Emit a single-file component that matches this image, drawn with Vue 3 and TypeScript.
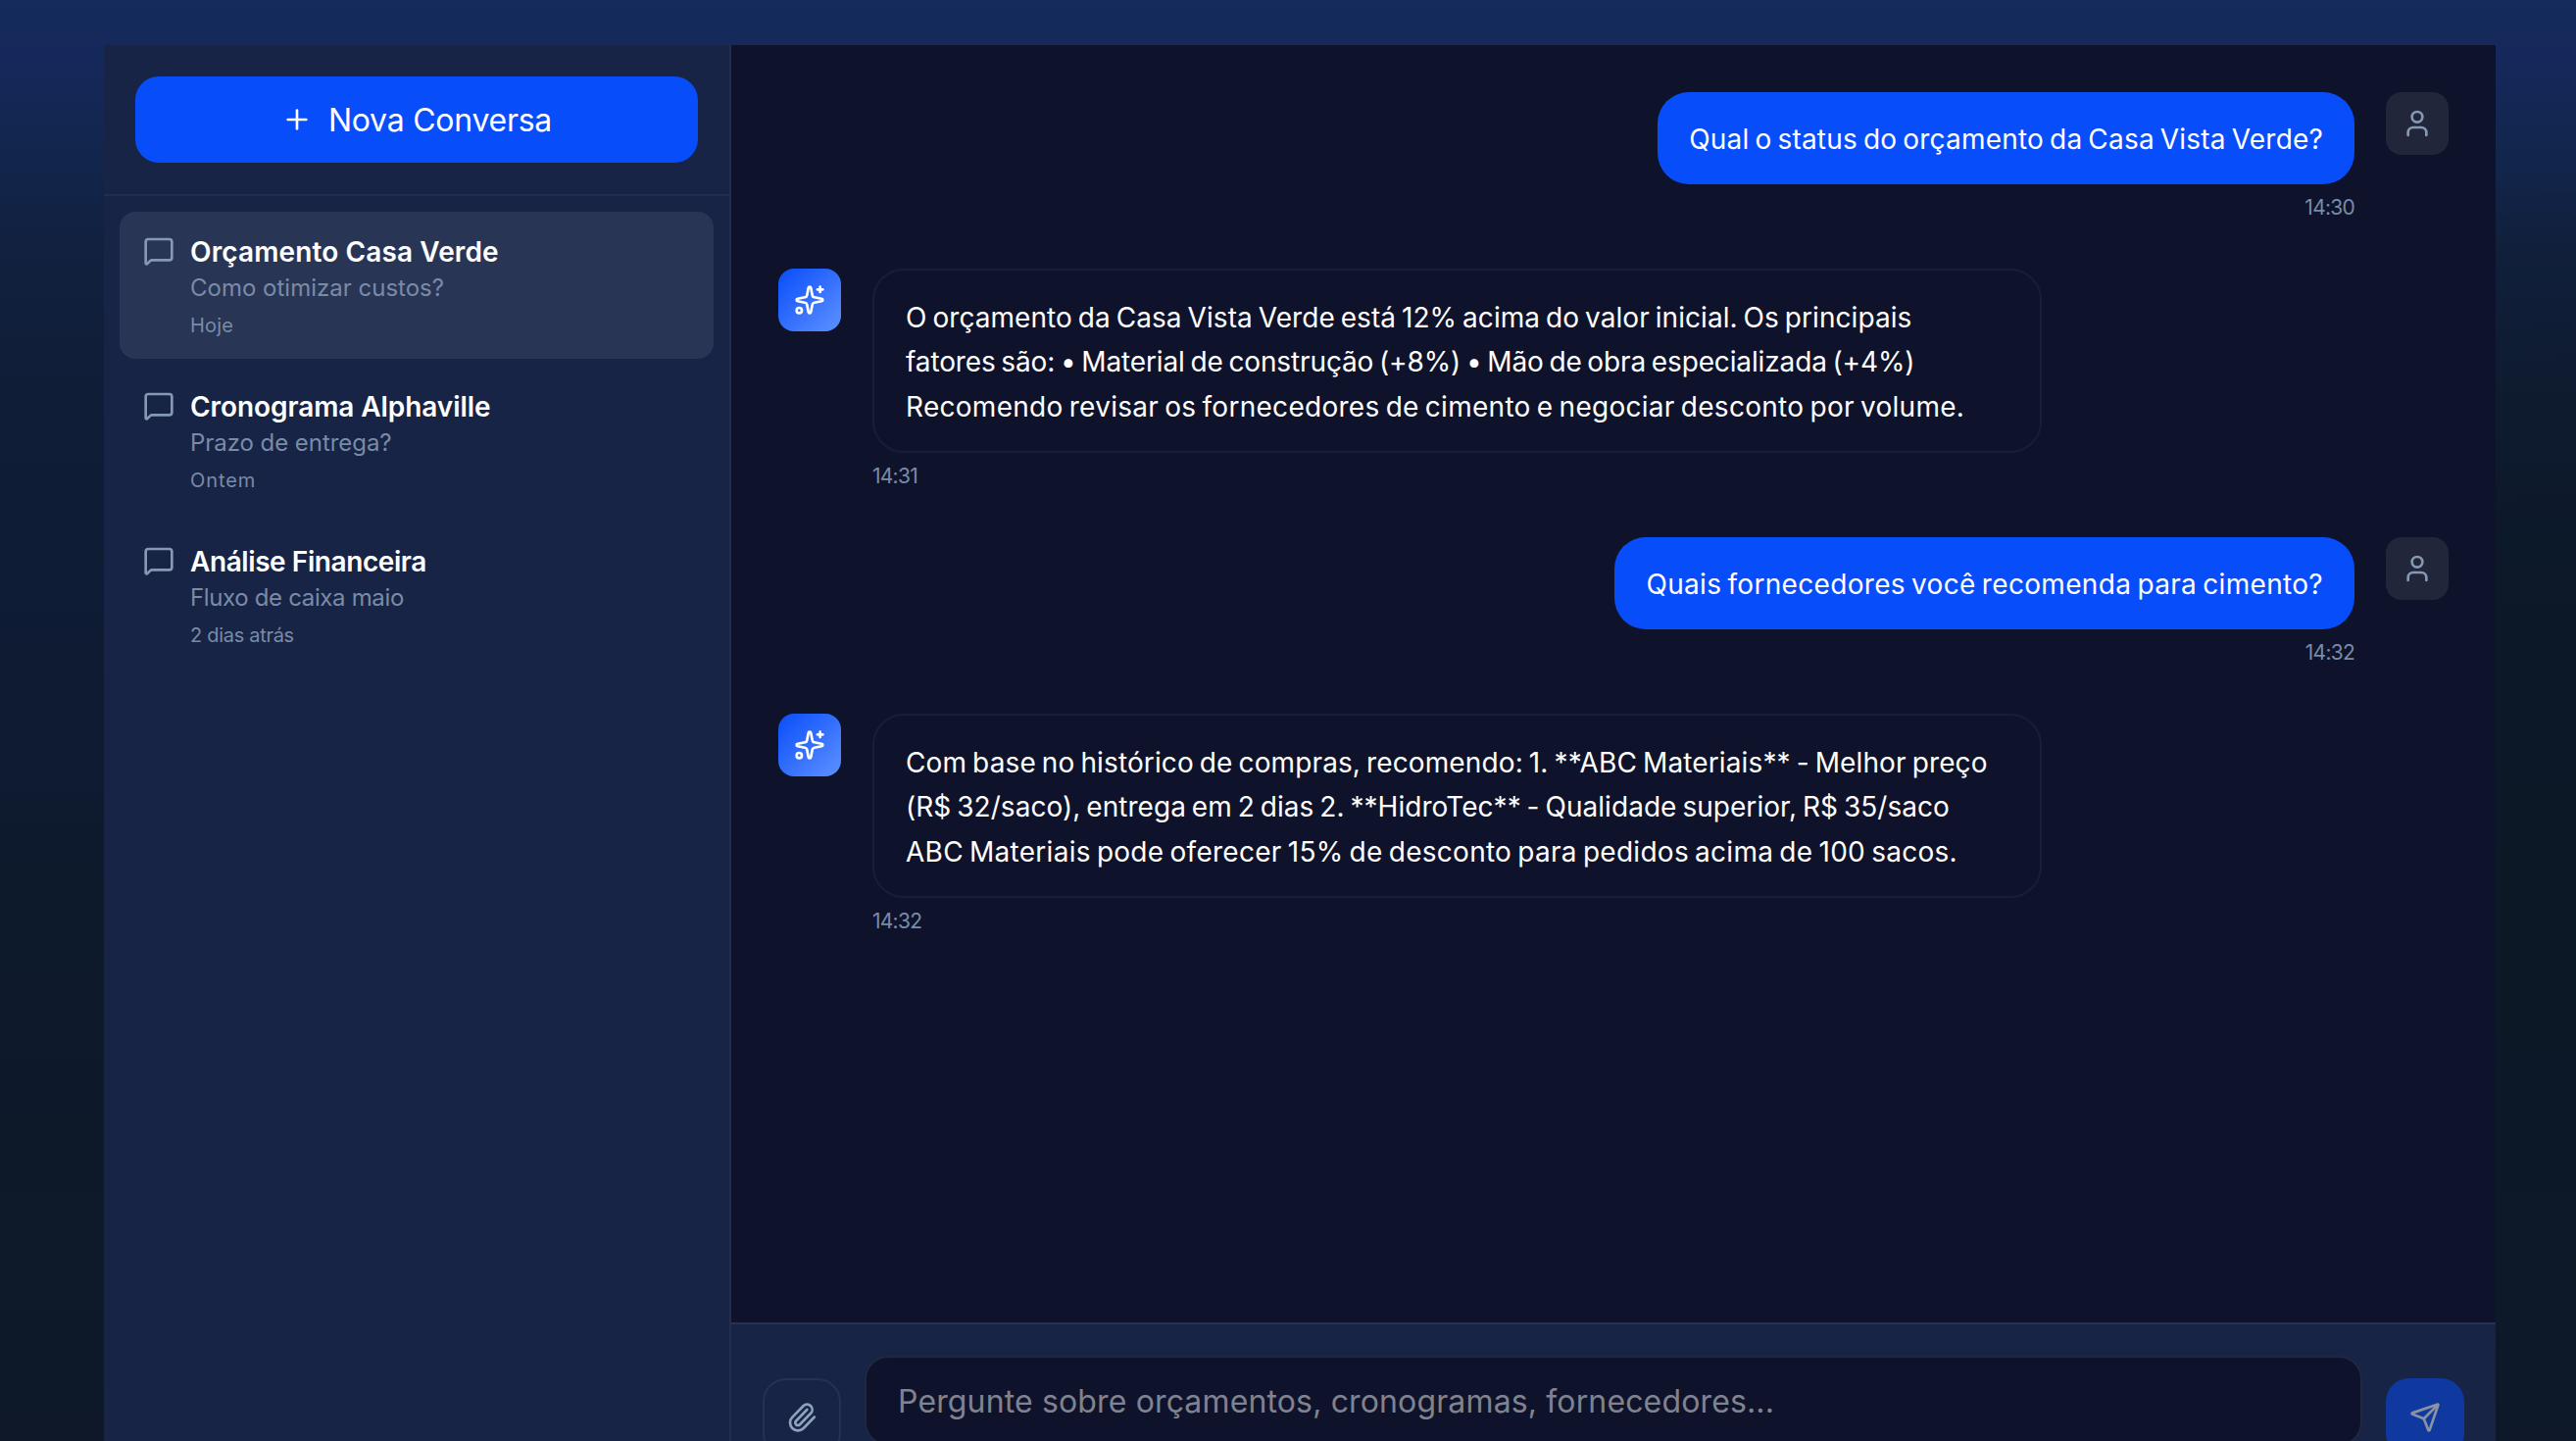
<script setup lang="ts">
interface Label {
  text: string
  spacing: number
}

interface Conversation {
  title: Label
  preview: Label
  when: Label
  active: boolean
}

interface Message {
  id: number
  role: 'user' | 'assistant'
  lines: Label[]
  time: string
}

const conversations: Conversation[] = [
  {
    title: { text: 'Orçamento Casa Verde', spacing: 0.12 },
    preview: { text: 'Como otimizar custos?', spacing: 0 },
    when: { text: 'Hoje', spacing: 0.2 },
    active: true,
  },
  {
    title: { text: 'Cronograma Alphaville', spacing: -0.08 },
    preview: { text: 'Prazo de entrega?', spacing: -0.05 },
    when: { text: 'Ontem', spacing: 0.9 },
    active: false,
  },
  {
    title: { text: 'Análise Financeira', spacing: -0.42 },
    preview: { text: 'Fluxo de caixa maio', spacing: -0.35 },
    when: { text: '2 dias atrás', spacing: -0.3 },
    active: false,
  },
]

const messages: Message[] = [
  {
    id: 1,
    role: 'user',
    lines: [{ text: 'Qual o status do orçamento da Casa Vista Verde?', spacing: 0.19 }],
    time: '14:30',
  },
  {
    id: 2,
    role: 'assistant',
    lines: [
      { text: 'O orçamento da Casa Vista Verde está 12% acima do valor inicial. Os principais', spacing: 0.06 },
      { text: 'fatores são: • Material de construção (+8%) • Mão de obra especializada (+4%)', spacing: -0.13 },
      { text: 'Recomendo revisar os fornecedores de cimento e negociar desconto por volume.', spacing: 0.28 },
    ],
    time: '14:31',
  },
  {
    id: 3,
    role: 'user',
    lines: [{ text: 'Quais fornecedores você recomenda para cimento?', spacing: 0.32 }],
    time: '14:32',
  },
  {
    id: 4,
    role: 'assistant',
    lines: [
      { text: 'Com base no histórico de compras, recomendo: 1. **ABC Materiais** - Melhor preço', spacing: 0.12 },
      { text: '(R$ 32/saco), entrega em 2 dias 2. **HidroTec** - Qualidade superior, R$ 35/saco', spacing: 0.045 },
      { text: 'ABC Materiais pode oferecer 15% de desconto para pedidos acima de 100 sacos.', spacing: 0.27 },
    ],
    time: '14:32',
  },
]

const track = (label: Label) => ({ letterSpacing: `${label.spacing}px` })
</script>

<template>
  <div class="page">
    <div class="shell">
      <aside class="sidebar">
        <div class="sidebar-head">
          <button class="new-chat" type="button">
            <svg class="icon" viewBox="0 0 24 24"><path d="M5 12h14" /><path d="M12 5v14" /></svg>
            <span>Nova Conversa</span>
          </button>
        </div>
        <nav class="list">
          <div v-for="c in conversations" :key="c.title.text" class="item" :class="{ active: c.active }">
            <svg class="icon muted" viewBox="0 0 24 24">
              <path d="M22 17a2 2 0 0 1-2 2H6.828a2 2 0 0 0-1.414.586l-2.202 2.202A.71.71 0 0 1 2 21.286V5a2 2 0 0 1 2-2h16a2 2 0 0 1 2 2z" />
            </svg>
            <div class="item-body">
              <div class="item-title" :style="track(c.title)">{{ c.title.text }}</div>
              <div class="item-preview" :style="track(c.preview)">{{ c.preview.text }}</div>
              <div class="item-when" :style="track(c.when)">{{ c.when.text }}</div>
            </div>
          </div>
        </nav>
      </aside>

      <main class="chat">
        <div class="messages">
          <div v-for="m in messages" :key="m.id" class="row" :class="m.role">
            <div class="avatar">
              <svg v-if="m.role === 'assistant'" class="icon" viewBox="0 0 24 24">
                <path d="M11.017 2.814a1 1 0 0 1 1.966 0l1.051 5.558a2 2 0 0 0 1.594 1.594l5.558 1.051a1 1 0 0 1 0 1.966l-5.558 1.051a2 2 0 0 0-1.594 1.594l-1.051 5.558a1 1 0 0 1-1.966 0l-1.051-5.558a2 2 0 0 0-1.594-1.594l-5.558-1.051a1 1 0 0 1 0-1.966l5.558-1.051a2 2 0 0 0 1.594-1.594z" />
                <path d="M20 2v4" />
                <path d="M22 4h-4" />
                <circle cx="4" cy="20" r="2" />
              </svg>
              <svg v-else class="icon muted" viewBox="0 0 24 24">
                <path d="M19 21v-2a4 4 0 0 0-4-4H9a4 4 0 0 0-4 4v2" />
                <circle cx="12" cy="7" r="4" />
              </svg>
            </div>
            <div class="content">
              <div class="bubble">
                <div v-for="l in m.lines" :key="l.text" :style="track(l)">{{ l.text }}</div>
              </div>
              <div class="time">{{ m.time }}</div>
            </div>
          </div>
        </div>

        <div class="composer">
          <button class="attach" type="button">
            <svg class="icon" viewBox="0 0 24 24">
              <path d="m16 6-8.414 8.586a2 2 0 0 0 2.829 2.829l8.414-8.586a4 4 0 1 0-5.657-5.657l-8.379 8.551a6 6 0 1 0 8.485 8.485l8.379-8.551" />
            </svg>
          </button>
          <div class="field"><span>Pergunte sobre orçamentos, cronogramas, fornecedores...</span></div>
          <button class="send" type="button">
            <svg class="icon" viewBox="0 0 24 24">
              <path d="M14.536 21.686a.5.5 0 0 0 .937-.024l6.5-19a.496.496 0 0 0-.635-.635l-19 6.5a.5.5 0 0 0-.024.937l7.93 3.18a2 2 0 0 1 1.112 1.11z" />
              <path d="m21.854 2.147-10.94 10.939" />
            </svg>
          </button>
        </div>
      </main>
    </div>
  </div>
</template>

<style>
html,
body {
  margin: 0;
  background: #0e1828;
  overflow: hidden;
}
</style>

<style scoped>
.page {
  box-sizing: border-box;
  width: 2628px;
  height: 1470px;
  padding: 46px 82px 0 106px;
  overflow: hidden;
  font-family: Inter, "Liberation Sans", sans-serif;
  color: #fff;
  background:
    radial-gradient(ellipse 900px 640px at 2628px 820px, rgba(12, 24, 38, 0.9) 30%, rgba(12, 24, 38, 0)),
    linear-gradient(
      180deg,
      #142b5c 0,
      #16285b 60px,
      #12264e 150px,
      #11213f 250px,
      #101d37 400px,
      #0e1b33 700px,
      #0d1a2b 950px,
      #0e1828 1470px
    );
}
button {
  padding: 0;
  border: 0;
  font: inherit;
  color: inherit;
}
.icon {
  display: block;
  flex: none;
  width: 32px;
  height: 32px;
  fill: none;
  stroke: currentColor;
  stroke-width: 2;
  stroke-linecap: round;
  stroke-linejoin: round;
}
.muted {
  color: #8599b3;
}
.shell {
  display: flex;
  height: 1424px;
  overflow: hidden;
}
.sidebar {
  box-sizing: border-box;
  flex: none;
  width: 640px;
  background: #172445;
  border-right: 2px solid #212e50;
}
.sidebar-head {
  box-sizing: border-box;
  height: 154px;
  padding: 32px;
  border-bottom: 2px solid #212e50;
}
.new-chat {
  display: flex;
  align-items: center;
  justify-content: center;
  gap: 16px;
  width: 574px;
  height: 88px;
  border-radius: 24px;
  background: #084dfa;
  font-size: 32px;
  letter-spacing: -0.25px;
  white-space: nowrap;
}
.new-chat .icon {
  margin-top: -1px;
}
.new-chat span {
  padding-top: 1px;
}
.list {
  display: flex;
  flex-direction: column;
  gap: 8px;
  padding: 16px;
}
.item {
  box-sizing: border-box;
  display: flex;
  gap: 16px;
  height: 150px;
  padding: 24px;
  border-radius: 16px;
}
.item.active {
  background: #293555;
}
.item-body {
  white-space: nowrap;
}
.item-title {
  font-size: 28px;
  line-height: 34px;
  font-weight: 600;
}
.item-preview {
  font-size: 24px;
  line-height: 39px;
  color: #798ba7;
}
.item-when {
  margin-top: 3px;
  font-size: 20px;
  line-height: 32px;
  color: #798ba7;
}
.chat {
  display: flex;
  flex-direction: column;
  flex: 1;
  background: #0e132b;
}
.messages {
  box-sizing: border-box;
  display: flex;
  flex: none;
  flex-direction: column;
  gap: 48px;
  height: 1303px;
  padding: 48px;
}
.row {
  display: flex;
  gap: 32px;
}
.row.user {
  flex-direction: row-reverse;
}
.avatar {
  display: flex;
  align-items: center;
  justify-content: center;
  flex: none;
  width: 64px;
  height: 64px;
  border-radius: 16px;
  background: #21263b;
}
.assistant .avatar {
  background: linear-gradient(135deg, #084dfa, #5e91ff);
}
.content {
  display: flex;
  flex-direction: column;
  align-items: flex-start;
}
.user .content {
  align-items: flex-end;
}
.bubble {
  box-sizing: border-box;
  padding: 26px 32px 22px;
  border-radius: 32px;
  font-size: 28px;
  line-height: 45.5px;
  word-spacing: -2px;
  white-space: nowrap;
}
.user .bubble {
  background: #084dfa;
}
.assistant .bubble {
  width: 1193px;
  padding: 25.5px 32px 21.5px;
  border: 2px solid #191e36;
}
.time {
  margin-top: 10px;
  font-size: 21px;
  line-height: 28.5px;
  letter-spacing: -0.75px;
  color: #798ba7;
}
.composer {
  box-sizing: border-box;
  display: flex;
  flex: none;
  align-items: flex-start;
  height: 200px;
  padding: 32px;
  background: #172445;
  border-top: 2px solid #253253;
}
.attach,
.send {
  box-sizing: border-box;
  display: flex;
  align-items: center;
  justify-content: center;
  flex: none;
  width: 80px;
  height: 80px;
  margin-top: 23px;
  border-radius: 24px;
}
.attach {
  background: transparent;
  border: 2px solid #253253;
  color: #8da2bd;
}
.send {
  background: #1039a0;
  color: #8b92a5;
}
.field {
  box-sizing: border-box;
  flex: 1;
  height: 92px;
  margin: 0 24px;
  padding: 0 32px;
  border: 2px solid #212740;
  border-radius: 24px;
  background: #0e132b;
  font-size: 32px;
  line-height: 90px;
  letter-spacing: 0.14px;
  color: #80838f;
  white-space: nowrap;
}
</style>
